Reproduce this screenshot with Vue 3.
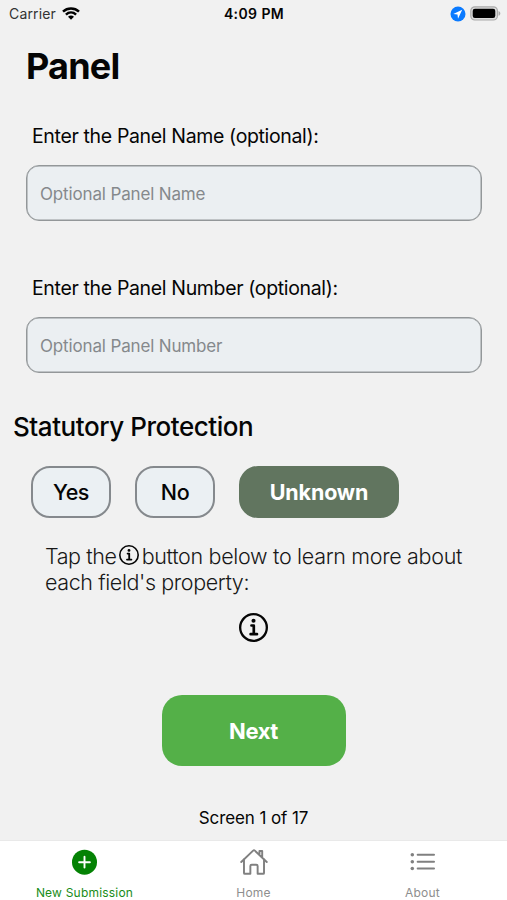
<script setup>
import { ref } from 'vue'

const panelName = ref('')
const panelNumber = ref('')
const protection = ref('Unknown')
const options = ['Yes', 'No', 'Unknown']
</script>

<template>
  <div class="screen">
    <header class="status">
      <div class="status-left">
        <span class="carrier">Carrier</span>
        <svg class="wifi" viewBox="0 0 18 13">
          <path d="M1 4.7C5.5.5 12.5.5 17 4.7" />
          <path d="M3.9 7.6c3-2.7 7.2-2.7 10.2 0" />
          <path class="fill" d="M6 9.7c1.8-1.5 4.2-1.5 6 0L9 12.8z" />
        </svg>
      </div>
      <span class="clock">4:09 PM</span>
      <div class="status-right">
        <svg class="location" viewBox="0 0 16 16">
          <circle cx="8" cy="8" r="7.5" fill="#0a7aff" />
          <path d="M12.2 3.8L3.3 8l4.2.5.5 4.2z" fill="#fff" />
        </svg>
        <svg class="battery" viewBox="0 0 31 15">
          <rect x=".8" y=".8" width="26.6" height="13.2" rx="4" fill="#ddd" stroke="#aaa" stroke-width="1.2" />
          <rect x="2.7" y="2.8" width="22.6" height="9.2" rx="2.2" fill="#000" />
          <path d="M28.5 5c2.4.8 2.4 4 0 4.8z" fill="#aaa" />
        </svg>
      </div>
    </header>

    <main>
      <h1>Panel</h1>
      <label class="label" for="panel-name">Enter the Panel Name (optional):</label>
      <input id="panel-name" v-model="panelName" class="field" placeholder="Optional Panel Name" />
      <label class="label second" for="panel-number">Enter the Panel Number (optional):</label>
      <input id="panel-number" v-model="panelNumber" class="field" placeholder="Optional Panel Number" />

      <h2>Statutory Protection</h2>
      <div class="options">
        <button
          v-for="option in options"
          :key="option"
          class="option"
          :class="{ selected: protection === option }"
          @click="protection = option"
        >{{ option }}</button>
      </div>

      <div class="hint">
        <div class="hint-line">
          <span>Tap the</span>
          <svg class="info small" viewBox="48 48 400 400">
            <circle cx="248" cy="248" r="184" />
            <path d="M220 220h32v116M208 340h88" />
            <circle class="dot" cx="248" cy="156" r="28" />
          </svg>
          <span class="rest">button below to learn more about</span>
        </div>
        <div class="hint-line"><span>each field's property:</span></div>
      </div>

      <button class="info-button" aria-label="Info">
        <svg class="info" viewBox="48 48 400 400">
          <circle cx="248" cy="248" r="184" />
          <path d="M220 220h32v116M208 340h88" />
          <circle class="dot" cx="248" cy="156" r="28" />
        </svg>
      </button>

      <button class="next">Next</button>
      <p class="progress">Screen 1 of 17</p>
    </main>

    <nav class="tabs">
      <a class="tab active">
        <svg viewBox="0 0 28 28">
          <circle cx="13.5" cy="14.2" r="12.5" fill="#048204" />
          <path d="M13.5 8.8v10.8M8.1 14.2h10.8" stroke="#fff" stroke-width="1.9" stroke-linecap="round" />
        </svg>
        <span>New Submission</span>
      </a>
      <a class="tab">
        <svg class="outline" viewBox="10 10 492 492">
          <path d="M80 212v236a16 16 0 0016 16h96V328a24 24 0 0124-24h80a24 24 0 0124 24v136h96a16 16 0 0016-16V212" />
          <path d="M480 256L266.89 52c-5-5.28-16.69-5.34-21.78 0L32 256M400 179V64h-48v69" />
        </svg>
        <span>Home</span>
      </a>
      <a class="tab">
        <svg class="outline" viewBox="16 16 492 492">
          <path d="M168 136h288M168 256h288M168 376h288" />
          <g class="dots">
            <circle cx="74" cy="136" r="31" />
            <circle cx="74" cy="256" r="31" />
            <circle cx="74" cy="376" r="31" />
          </g>
        </svg>
        <span>About</span>
      </a>
    </nav>
  </div>
</template>

<style>
body {
  margin: 0;
  background: #f1f1f1;
}
</style>

<style scoped>
.screen {
  display: flex;
  flex-direction: column;
  width: 507px;
  height: 900px;
  overflow: hidden;
  background: #f1f1f1;
  color: #050505;
  font-family: Inter, "Liberation Sans", sans-serif;
  white-space: nowrap;
}
button, input {
  box-sizing: border-box;
  margin: 0;
  padding: 0;
  border: 0;
  background: none;
  color: inherit;
  font-family: inherit;
}
.status {
  display: grid;
  grid-template-columns: 1fr auto 1fr;
  align-items: center;
  height: 28px;
  padding: 0 6px 0 9px;
  font-size: 14px;
}
.status-left, .status-right {
  display: flex;
  align-items: center;
}
.status-left { gap: 6px; }
.carrier { padding-bottom: 2px; color: #333; letter-spacing: .15px; }
.wifi { width: 18px; height: 13px; margin-top: -2px; fill: none; stroke: #000; stroke-width: 2.5; }
.wifi .fill { fill: #000; stroke: none; }
.clock { padding: 0 2px 2px 0; font-weight: 600; letter-spacing: .4px; }
.status-right { justify-content: flex-end; gap: 4px; }
.location { width: 16px; height: 16px; }
.battery { width: 31px; height: 15px; margin-top: -1px; }
main {
  display: flex;
  flex: 1;
  flex-direction: column;
}
h1 {
  margin: 16px 0 0 26px;
  font-size: 36px;
  line-height: 44px;
  font-weight: 700;
  letter-spacing: -.8px;
}
.label {
  margin: 36px 0 0 32px;
  font-size: 19.5px;
  line-height: 25px;
  letter-spacing: -.35px;
}
.field {
  height: 56px;
  margin: 16px 25px 0 26px;
  padding: 2px 12px 0 13px;
  border: 1px solid #939799;
  border-radius: 13px;
  background: #ebeff2;
  box-shadow: inset 0 0 0 .5px #939799;
  font-size: 17px;
  letter-spacing: -.15px;
  outline: none;
}
.field::placeholder { color: #85898c; opacity: 1; }
.label.second { margin-top: 55px; }
h2 {
  margin: 38px 0 0 13px;
  font-size: 26px;
  line-height: 32px;
  font-weight: 500;
  letter-spacing: -.45px;
}
.options {
  display: flex;
  gap: 24px;
  margin: 23px 0 0 31px;
}
.option {
  width: 80px;
  height: 52px;
  border: 2px solid #85898d;
  border-radius: 19px;
  background: #ebf0f3;
  font-size: 21.5px;
  font-weight: 500;
  letter-spacing: -.4px;
}
.option.selected {
  width: 160px;
  border-color: #61755f;
  background: #61755f;
  color: #fff;
  font-weight: 700;
  letter-spacing: -.15px;
}
.hint {
  margin: 25px 0 0 45px;
  color: #181818;
  font-size: 21.5px;
  line-height: 26px;
  font-weight: 300;
  letter-spacing: -.4px;
}
.hint-line { display: flex; height: 26px; }
.hint .rest { letter-spacing: -.32px; }
.info {
  display: block;
  width: 29px;
  height: 29px;
  fill: none;
  stroke: #050505;
  stroke-width: 32;
  stroke-linecap: round;
  stroke-linejoin: round;
}
.info path { stroke-width: 37; }
.info .dot { fill: #050505; stroke: none; }
.info.small { width: 20px; height: 20px; margin: 2px 3px 0 2px; }
.info-button { align-self: center; margin-top: 18px; }
.next {
  align-self: center;
  width: 184px;
  height: 71px;
  margin-top: 53px;
  border-radius: 20px;
  background: #54b048;
  color: #fff;
  font-size: 22px;
  font-weight: 700;
  letter-spacing: -.4px;
}
.progress {
  margin: 41px 0 0;
  font-size: 17px;
  line-height: 22px;
  letter-spacing: -.1px;
  text-align: center;
}
.tabs {
  display: grid;
  grid-template-columns: repeat(3, 1fr);
  height: 60px;
  border-top: 1px solid #e9e9e9;
  box-sizing: border-box;
  background: #fff;
}
.tab {
  display: flex;
  flex-direction: column;
  align-items: center;
  padding-top: 7px;
  color: #8e8e8e;
  font-size: 12px;
  line-height: 16px;
  letter-spacing: .2px;
}
.tab.active { color: #198c19; }
.tab svg { width: 28px; height: 28px; margin-bottom: 9px; }
.outline {
  fill: none;
  stroke: #808080;
  stroke-width: 34;
  stroke-linecap: round;
  stroke-linejoin: round;
}
.dots { fill: #808080; stroke: none; }
</style>
